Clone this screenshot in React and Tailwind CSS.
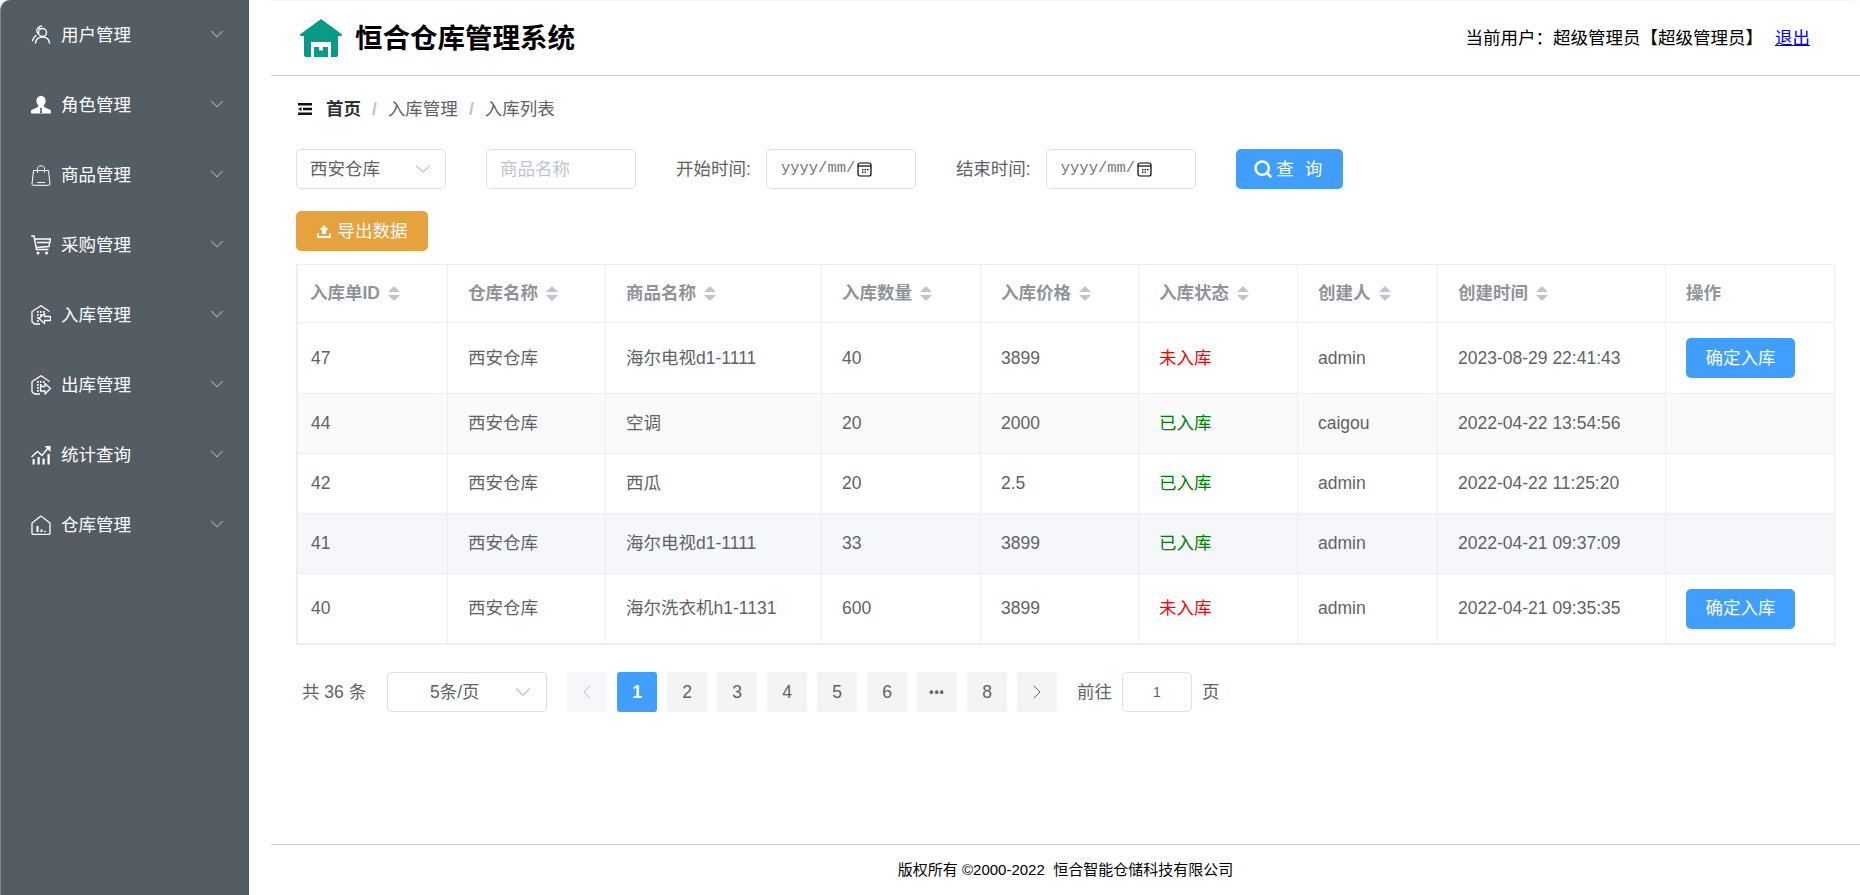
import { ChevronDown, ChevronLeft, ChevronRight, Search } from 'lucide-react'

const UsersIcon = () => (
  <svg viewBox="0 0 20 20" className="w-5 h-5" fill="none" stroke="white" strokeWidth="1.400">
    <circle cx="11.500" cy="7.500" r="4" />
    <path d="M4.500 18c.5-3.500 3.200-6 7-6s6.500 2.500 7 6" strokeLinecap="round" />
    <path d="M8 3.500C7.500 2 9 .8 10.500 1.200M7 8.500C5.500 7 5.500 4.500 7 3M5 10.500c-1.500 1-3 3-3.500 5" strokeLinecap="round" />
  </svg>
)

const RoleIcon = () => (
  <svg viewBox="0 0 20 20" className="w-5 h-5" fill="white">
    <ellipse cx="10" cy="6" rx="4.600" ry="5.200" />
    <path d="M7 10.500h6l.5 1.800L19.500 15c.4.300.500 1.200.500 2.500 0 .8-.4 1-1 1H1c-.6 0-1-.2-1-1 0-1.300.1-2.200.5-2.500l6-2.700z" />
    <path d="M9.200 13h1.600l.2 1.200-.4.500.5 3.300H8.900l.5-3.300-.4-.5z" fill="#545c64" />
  </svg>
)

const BagIcon = () => (
  <svg viewBox="0 0 20 21" className="w-5 h-[21px]" fill="none" stroke="white" strokeWidth="1">
    <path d="M2.500 5.500h15l1.500 13.500c0 .8-.5 1.300-1.200 1.300H2.200c-.7 0-1.200-.5-1.200-1.300z" />
    <path d="M6.500 8V3.500C6.500 1.800 8 .8 10 .8s3.500 1 3.500 2.700V8M6 17.500h8" />
  </svg>
)

const CartIcon = () => (
  <svg viewBox="0 0 20 20" className="w-5 h-5" fill="none" stroke="white" strokeWidth="1.400">
    <path d="M.2 1h2.800l2.500 13.500h12M4 4h15.500l-1.600 7.500L5.200 12.500M6 7.500h13" />
    <circle cx="7" cy="18" r="1.500" fill="white" stroke="none" />
    <circle cx="15.500" cy="18" r="1.500" fill="white" stroke="none" />
  </svg>
)

// warehouse with a dotted front and an arrow, flipped for stock in and out
const StockIcon = ({ out }) => (
  <svg viewBox="0 0 20 20" className="w-5 h-5" fill="none" stroke="white" strokeWidth="1.300">
    <path d="M18.500 6.500L10 .8 1 6.500v10.200L3.500 19H9" />
    <path d="M6 6h1.700v1.700H6zM9 6h1.700v1.700H9zM12 6h1.700v1.700H12zM6 9h1.700v1.700H6zM9 9h1.700v1.700H9zM6 12h1.700v1.700H6zM6 15h1.700v1.700H6z" fill="white" stroke="none" />
    {out ? (
      <path d="M9.500 11.500h4.500V8.500l5.500 5-5.500 5.500v-3H9.500z" strokeLinejoin="round" />
    ) : (
      <path d="M19.500 11.500h-6V8.500l-5.500 5 5.500 5v-3h6z" strokeLinejoin="round" />
    )}
  </svg>
)

const ChartIcon = () => (
  <svg viewBox="0 0 20 20" className="w-5 h-5" fill="white">
    <rect x="1.500" y="14" width="2.200" height="5.500" />
    <rect x="6.500" y="12" width="2.200" height="7.500" />
    <rect x="11.500" y="13.500" width="2.200" height="6" />
    <rect x="16.500" y="9" width="2.200" height="10.500" />
    <path d="M.5 12L6.500 6.500 11 10.500 17 3" fill="none" stroke="white" strokeWidth="1.500" />
    <path d="M13.500 1h6v6z" />
  </svg>
)

const StoreIcon = () => (
  <svg viewBox="0 0 20 20" className="w-5 h-5" fill="none" stroke="white" strokeWidth="1.300">
    <path d="M10 1L1 8v10.500c0 .5.400.8.800.8h16.400c.4 0 .8-.3.800-.8V8z" />
    <path d="M6.500 11v6M10.500 14.500V17M14 16v1" strokeWidth="2" />
  </svg>
)

const menus = [
  { name: '用户管理', icon: <UsersIcon /> },
  { name: '角色管理', icon: <RoleIcon /> },
  { name: '商品管理', icon: <BagIcon /> },
  { name: '采购管理', icon: <CartIcon /> },
  { name: '入库管理', icon: <StockIcon /> },
  { name: '出库管理', icon: <StockIcon out /> },
  { name: '统计查询', icon: <ChartIcon /> },
  { name: '仓库管理', icon: <StoreIcon /> },
]

const columns = [
  { title: '入库单ID', width: 'w-[150px]', pad: 'pl-[12px]' },
  { title: '仓库名称', width: 'w-[158px]', pad: 'pl-[20px]' },
  { title: '商品名称', width: 'w-[216px]', pad: 'pl-[20px]' },
  { title: '入库数量', width: 'w-[159px]', pad: 'pl-[20px]' },
  { title: '入库价格', width: 'w-[158px]', pad: 'pl-[20px]' },
  { title: '入库状态', width: 'w-[159px]', pad: 'pl-[20px]' },
  { title: '创建人', width: 'w-[140px]', pad: 'pl-[20px]' },
  { title: '创建时间', width: 'w-[228px]', pad: 'pl-[20px]' },
  { title: '操作', width: 'w-[168px]', pad: 'pl-[20px]', noSort: true },
]

const rows = [
  { id: 47, store: '西安仓库', goods: '海尔电视d1-1111', num: 40, price: 3899, done: false, user: 'admin', time: '2023-08-29 22:41:43', height: 'h-[71px]', bg: 'bg-white' },
  { id: 44, store: '西安仓库', goods: '空调', num: 20, price: 2000, done: true, user: 'caigou', time: '2022-04-22 13:54:56', height: 'h-[60px]', bg: 'bg-[#fafafa]' },
  { id: 42, store: '西安仓库', goods: '西瓜', num: 20, price: 2.5, done: true, user: 'admin', time: '2022-04-22 11:25:20', height: 'h-[60px]', bg: 'bg-white' },
  { id: 41, store: '西安仓库', goods: '海尔电视d1-1111', num: 33, price: 3899, done: true, user: 'admin', time: '2022-04-21 09:37:09', height: 'h-[60px]', bg: 'bg-[#f5f7fa]' },
  { id: 40, store: '西安仓库', goods: '海尔洗衣机h1-1131', num: 600, price: 3899, done: false, user: 'admin', time: '2022-04-21 09:35:35', height: 'h-[69px]', bg: 'bg-white', last: true },
]

const SortIcon = () => (
  <svg viewBox="0 0 12 15" className="w-3 h-[15px] ml-[8px] shrink-0" fill="#c0c4cc">
    <path d="M6 0l6 6H0zM0 9h12l-6 6z" />
  </svg>
)

const CalendarIcon = () => (
  <svg viewBox="0 0 15 15" className="w-[15px] h-[15px] ml-[2px]" fill="none" stroke="black" strokeWidth="1.200">
    <rect x="1" y="1" width="13" height="13" rx="2" />
    <path d="M1 4h13" />
    <path d="M5 7h1.500v1.300H5zM7.500 7H9v1.300H7.500zM10 7h1.500v1.300H10zM5 9.500h1.500v1.300H5zM7.500 9.500H9v1.300H7.500z" fill="black" stroke="none" />
  </svg>
)

const DateInput = () => (
  <div className="w-[150px] h-10 flex items-center pl-[14px] rounded-[5px] border border-[#dcdfe6] bg-white">
    <span className="text-[15.5px] text-[#757575] font-['Liberation_Mono',monospace]">yyyy/mm/</span>
    <CalendarIcon />
  </div>
)

const pageBtn = 'w-10 h-10 flex items-center justify-center rounded-[3px] text-[#606266]'

function App() {
  return (
    <div className="flex h-screen overflow-hidden bg-white text-[17.5px] font-['Liberation_Sans','Noto_Sans_CJK_SC',sans-serif]">
      {/* Sidebar */}
      <aside className="w-[249px] shrink-0 bg-[#545c64] rounded-tl-[10px] border-l border-[#80868c]">
        {menus.map((menu) => (
          <div key={menu.name} className="h-[70px] flex items-center pl-[30px] pr-[21px] text-white">
            <span className="w-5 flex justify-center">{menu.icon}</span>
            <span className="ml-[10px] flex-1">{menu.name}</span>
            <ChevronDown className="w-[22px] h-[22px] mb-[2px] text-[#b4b8bc]" strokeWidth={1.100} />
          </div>
        ))}
      </aside>

      <div className="flex-1 min-w-0 ml-[22px] flex flex-col">
        {/* Header */}
        <header className="h-[76px] shrink-0 border-b border-t border-b-[#cccccc] border-t-[#f4f4f4] rounded-tr-[10px] flex items-center pl-[29px] pr-[50px]">
          <svg viewBox="0 0 42 38" className="w-[42px] h-[38px]" fill="#079a86">
            <path d="M21 0l20.500 15c.8.700.5 2-.7 2H38v19c0 1.200-.8 2-2 2h-5V23H11v15H6c-1.200 0-2-.8-2-2V17H1.200c-1.200 0-1.500-1.300-.7-2z" />
            <path d="M14 28h5v3.500h4V28h5v10H14z" />
          </svg>
          <h1 className="ml-[13px] mt-[2px] text-[27.5px] font-bold text-black">恒合仓库管理系统</h1>
          <div className="ml-auto text-black">
            当前用户：超级管理员【超级管理员】
            <a href="#" className="ml-3 text-[#0000ee] underline">退出</a>
          </div>
        </header>

        <main className="flex-1 px-[25px] pt-[21px]">
          {/* Breadcrumb */}
          <div className="h-6 flex items-center text-[#606266]">
            <svg viewBox="0 0 14 12" className="w-[14px] h-3 ml-[2px] mr-[14px]" fill="#111111">
              <path d="M0 0h14v2.500H0zM5 4.800h9v2.400H5zM0 9.500h14V12H0zM0 6l3.500-2v4z" />
            </svg>
            <span className="font-bold text-[#303133]">首页</span>
            <span className="mx-[11px] font-bold text-[#c0c4cc]">/</span>
            <span>入库管理</span>
            <span className="mx-[11px] font-bold text-[#c0c4cc]">/</span>
            <span>入库列表</span>
          </div>

          {/* Filters */}
          <div className="mt-[28px] flex items-center text-[#606266]">
            <div className="w-[150px] h-10 flex items-center justify-between pl-[13px] pr-[9px] rounded-[5px] border border-[#dcdfe6]">
              <span>西安仓库</span>
              <ChevronDown className="w-[26px] h-[26px] text-[#c0c4cc]" strokeWidth={1} />
            </div>
            <div className="ml-10 w-[150px] h-10 flex items-center pl-[13px] rounded-[5px] border border-[#dcdfe6] text-[#c0c4cc]">
              商品名称
            </div>
            <span className="ml-10 mr-[15px]">开始时间:</span>
            <DateInput />
            <span className="ml-10 mr-[15px]">结束时间:</span>
            <DateInput />
            <button className="ml-10 w-[107px] h-10 flex items-center justify-center rounded-[5px] bg-[#409eff] text-white">
              <Search className="w-5 h-5" strokeWidth={3} />
              <span className="ml-[3px] tracking-[3px]">查 询</span>
            </button>
          </div>

          <button className="mt-[22px] w-[132px] h-10 flex items-center justify-center rounded-[5px] bg-[#e6a23c] text-white">
            <svg viewBox="0 0 14 14" className="w-[14px] h-[14px] mr-[7px]" fill="white">
              <path d="M7 1l4.500 5H9v4H5V6H2.500zM0 9.500h2V12h10V9.500h2V14H0z" />
            </svg>
            导出数据
          </button>

          {/* Table */}
          <div className="mt-[13px] border border-l-2 border-b-2 border-[#ebeef5]">
            <table className="w-full table-fixed border-separate border-spacing-0">
              <thead>
                <tr>
                  {columns.map((col, i) => (
                    <th
                      key={col.title}
                      className={`${col.width} ${col.pad} h-[58px] text-left font-bold text-[#909399] border-b border-[#ebeef5] ${i < columns.length - 1 ? 'border-r' : ''}`}
                    >
                      <div className="flex items-center">
                        {col.title}
                        {!col.noSort && <SortIcon />}
                      </div>
                    </th>
                  ))}
                </tr>
              </thead>
              <tbody className="text-[#606266]">
                {rows.map((row) => {
                  const cell = `border-[#ebeef5] ${row.last ? '' : 'border-b'}`
                  const body = `${cell} pl-[20px] border-r`
                  return (
                    <tr key={row.id} className={`${row.height} ${row.bg}`}>
                      <td className={`${cell} pl-[13px] border-r`}>{row.id}</td>
                      <td className={body}>{row.store}</td>
                      <td className={body}>{row.goods}</td>
                      <td className={body}>{row.num}</td>
                      <td className={body}>{row.price}</td>
                      <td className={`${body} ${row.done ? 'text-[#008000]' : 'text-[#ff0000]'}`}>
                        {row.done ? '已入库' : '未入库'}
                      </td>
                      <td className={body}>{row.user}</td>
                      <td className={body}>{row.time}</td>
                      <td className={`${cell} pl-[20px]`}>
                        {!row.done && (
                          <button className="w-[109px] h-10 rounded-[5px] bg-[#409eff] text-white">确定入库</button>
                        )}
                      </td>
                    </tr>
                  )
                })}
              </tbody>
            </table>
          </div>

          {/* Pagination */}
          <div className="mt-[27px] pl-[6px] flex items-center text-[#606266]">
            <span className="w-[66px]">共 36 条</span>
            <div className="ml-[19px] w-[160px] h-10 flex items-center pr-[10px] rounded-[5px] border border-[#dcdfe6]">
              <span className="flex-1 pl-[42px]">5条/页</span>
              <ChevronDown className="w-[26px] h-[26px] text-[#c0c4cc]" strokeWidth={1} />
            </div>
            <div className="ml-5 flex items-center gap-[10px]">
              <div className={`${pageBtn} bg-[#f5f7fa]`}>
                <ChevronLeft className="w-6 h-6 text-[#c0c4cc]" strokeWidth={1} />
              </div>
              <div className="w-10 h-10 flex items-center justify-center rounded-[3px] bg-[#409eff] text-white font-bold">1</div>
              {[2, 3, 4, 5, 6].map((n) => (
                <div key={n} className={`${pageBtn} bg-[#f4f4f5]`}>{n}</div>
              ))}
              <div className={`${pageBtn} bg-[#f4f4f5] font-bold text-[12px] tracking-[1px]`}>•••</div>
              <div className={`${pageBtn} bg-[#f4f4f5]`}>8</div>
              <div className={`${pageBtn} bg-[#f4f4f5]`}>
                <ChevronRight className="w-6 h-6 text-[#606266]" strokeWidth={1} />
              </div>
            </div>
            <span className="ml-5">前往</span>
            <div className="ml-[10px] w-[70px] h-10 flex items-center justify-center rounded-[5px] border border-[#dcdfe6] text-[14px]">1</div>
            <span className="ml-[10px]">页</span>
          </div>
        </main>

        {/* Footer */}
        <footer className="h-[51px] shrink-0 border-t border-[#cccccc] flex items-center justify-center text-[15px] text-black whitespace-pre">
          版权所有 ©2000-2022  恒合智能仓储科技有限公司
        </footer>
      </div>
    </div>
  )
}

export default App
